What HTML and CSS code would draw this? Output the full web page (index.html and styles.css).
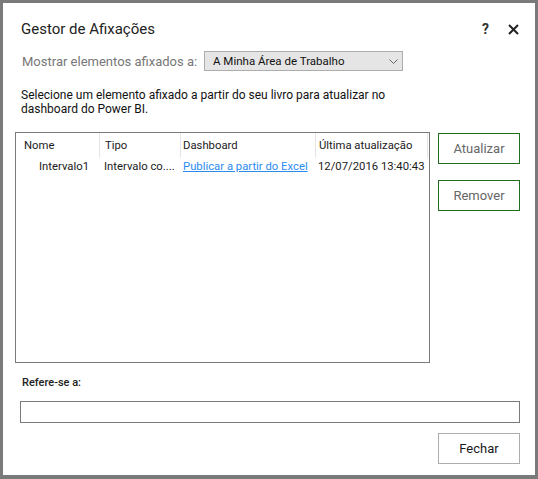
FILE: index.html
```html
<!DOCTYPE html>
<html lang="pt">
<head>
<meta charset="utf-8">
<title>Gestor de Afixações</title>
<link rel="stylesheet" href="styles.css">
</head>
<body>
<div class="window">
  <div class="titlebar">
    <div class="title">Gestor de Afixações</div>
    <div class="title-actions">
      <span class="help">?</span>
      <svg class="close" width="11" height="11" viewBox="0 0 11 11"><path d="M1 1 L10 10 M10 1 L1 10" stroke="#222" stroke-width="2" fill="none"/></svg>
    </div>
  </div>
  <div class="show-row">
    <span class="show-label">Mostrar elementos afixados a:</span>
    <div class="select">
      <span>A Minha Área de Trabalho</span>
      <svg width="9" height="5" viewBox="0 0 9 5"><path d="M0.5 0.5 L4.5 4.5 L8.5 0.5" stroke="#666" stroke-width="1" fill="none"/></svg>
    </div>
  </div>
  <p class="desc">Selecione um elemento afixado a partir do seu livro para atualizar no dashboard do Power BI.</p>
  <div class="main">
    <div class="list">
      <div class="grid head">
        <div class="c c1 h">Nome</div>
        <div class="c c2 h">Tipo</div>
        <div class="c c3 h">Dashboard</div>
        <div class="c c4 h">Última atualização</div>
      </div>
      <div class="grid row">
        <div class="c c1 r">Intervalo1</div>
        <div class="c c2 r">Intervalo co....</div>
        <div class="c c3 r"><a class="link" href="#">Publicar a partir do Excel</a></div>
        <div class="c c4 r">12/07/2016 13:40:43</div>
      </div>
    </div>
    <div class="side">
      <button class="btn green">Atualizar</button>
      <button class="btn green">Remover</button>
    </div>
  </div>
  <div class="refers">Refere-se a:</div>
  <div class="input"></div>
  <div class="footer">
    <button class="btn plain">Fechar</button>
  </div>
</div>
</body>
</html>
```

FILE: styles.css
```css
* { box-sizing: border-box; }
html, body { margin: 0; padding: 0; background: #fff; }
body {
  font-family: "Segoe UI", Roboto, "Noto Sans", sans-serif;
  font-size: 12px;
  color: #1a1a1a;
}
.window {
  width: 538px;
  height: 479px;
  border: 3px solid #7a7a7a;
  border-bottom-width: 4px;
  background: #fff;
  display: flex;
  flex-direction: column;
}
.titlebar {
  display: flex;
  justify-content: space-between;
  align-items: center;
  height: 20px;
  margin-top: 16px;
  padding-left: 18px;
  padding-right: 16px;
}
.title { font-size: 15px; color: #222; line-height: 20px; }
.title-actions { display: flex; align-items: center; gap: 19px; }
.help { font-size: 14px; font-weight: bold; color: #333; line-height: 20px; }
.close { display: block; margin-top: 1px; }
.show-row {
  display: flex;
  align-items: center;
  margin-top: 12px;
  padding-left: 19px;
  height: 20px;
}
.show-label { font-size: 13px; color: #777; width: 182px; }
.select {
  width: 199px;
  height: 20px;
  background: #e5e5e5;
  border: 1px solid #adadad;
  display: flex;
  align-items: center;
  justify-content: space-between;
  padding: 0 4px 0 8px;
  font-size: 11.5px;
  color: #111;
}
.desc {
  margin: 17px 0 0 0;
  padding-left: 18px;
  width: 400px;
  font-size: 12px;
  line-height: 14px;
  color: #111;
}
.main {
  display: flex;
  margin-top: 16px;
  padding-left: 12px;
  gap: 8px;
}
.list {
  width: 415px;
  height: 231px;
  border: 1px solid #7a7a7a;
  font-size: 11.3px;
}
.grid {
  display: grid;
  grid-template-columns: 84px 81px 135px 112px;
}
.head { height: 24px; }
.h {
  line-height: 25px;
  border-right: 1px solid #e5e5e5;
  white-space: nowrap;
}
.c1.h { padding-left: 8px; }
.c2.h { padding-left: 5px; }
.c3.h { padding-left: 2px; }
.c4.h { padding-left: 3px; }
.row { height: 18px; }
.r { line-height: 19px; white-space: nowrap; }
.c1.r { padding-left: 23px; }
.c2.r { padding-left: 4px; overflow: hidden; }
.c3.r { padding-left: 2px; }
.c4.r { padding-left: 2px; }
.link { color: #2b8cf0; text-decoration: underline; }
.side {
  display: flex;
  flex-direction: column;
  gap: 16px;
  padding-top: 1px;
}
.btn {
  width: 82px;
  height: 31px;
  background: #fff;
  font-family: inherit;
  font-size: 13px;
  padding: 0;
}
.green { border: 1px solid #1f6e1f; color: #666; }
.plain { border: 1px solid #adadad; color: #1a1a1a; }
.refers {
  margin-top: 13px;
  padding-left: 19px;
  font-size: 11px;
  font-weight: 500;
  color: #222;
  line-height: 14px;
}
.input {
  margin: 11px 0 0 17px;
  width: 500px;
  height: 22px;
  border: 1px solid #7a7a7a;
}
.footer {
  display: flex;
  justify-content: flex-end;
  padding-right: 15px;
  margin-top: 10px;
}
```
